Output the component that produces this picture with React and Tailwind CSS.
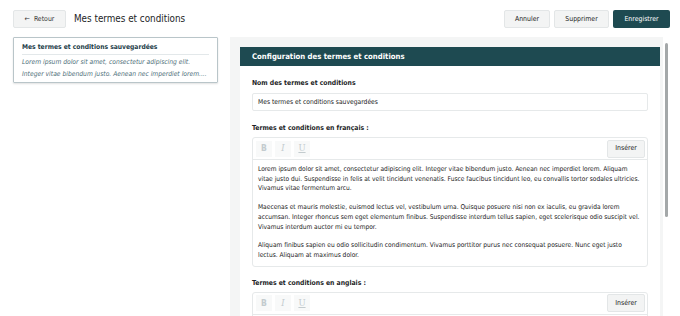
import React from 'react';

const teal = 'bg-[#1e4a51]';

const paragraphs = [
  [
    'Lorem ipsum dolor sit amet, consectetur adipiscing elit. Integer vitae bibendum justo. Aenean nec imperdiet lorem. Aliquam',
    'vitae justo dui. Suspendisse in felis at velit tincidunt venenatis. Fusce faucibus tincidunt leo, eu convallis tortor sodales ultricies.',
    'Vivamus vitae fermentum arcu.',
  ],
  [
    'Maecenas et mauris molestie, euismod lectus vel, vestibulum urna. Quisque posuere nisi non ex iaculis, eu gravida lorem',
    'accumsan. Integer rhoncus sem eget elementum finibus. Suspendisse interdum tellus sapien, eget scelerisque odio suscipit vel.',
    'Vivamus interdum auctor mi eu tempor.',
  ],
  [
    'Aliquam finibus sapien eu odio sollicitudin condimentum. Vivamus porttitor purus nec consequat posuere. Nunc eget justo',
    'lectus. Aliquam at maximus dolor.',
  ],
];

const Toolbar = () => (
  <div className="flex items-center justify-between h-[22px] border-b border-[#e6e9ea] pl-[3px] pr-[2px]">
    <div className="flex items-center gap-[3px] text-[#c3cbce] text-[8.5px]">
      <span className="w-[16px] h-[16px] flex items-center justify-center bg-[#f8f9f9] font-bold">B</span>
      <span className="w-[16px] h-[16px] flex items-center justify-center bg-[#f8f9f9] italic font-['DejaVu_Serif',serif]">I</span>
      <span className="w-[16px] h-[16px] flex items-center justify-center bg-[#f8f9f9] underline font-['DejaVu_Serif',serif]">U</span>
    </div>
    <button className="h-[18px] w-[38px] bg-[#f3f4f4] border border-[#e3e6e7] rounded-[2px] text-[6.9px] text-[#222]">
      Insérer
    </button>
  </div>
);

export default function App() {
  return (
    <div className="w-[680px] h-[316px] overflow-hidden bg-white text-[#1c2426] font-['DejaVu_Sans_Condensed','DejaVu_Sans',sans-serif]">
      {/* Header */}
      <div className="flex items-center justify-between pl-[13px] pr-[10px] pt-[10px]">
        <div className="flex items-center gap-[8px]">
          <button className="h-[18px] w-[53px] flex items-center justify-center gap-[4px] bg-[#f3f4f4] border border-[#e3e6e7] rounded-[2px] text-[6.9px] text-[#333]">
            <span className="text-[7px]">&larr;</span> Retour
          </button>
          <h1 className="text-[9.8px] text-[#1c2426]">Mes termes et conditions</h1>
        </div>
        <div className="flex items-center gap-[4px] text-[6.9px]">
          <button className="h-[18px] w-[46px] bg-[#f3f4f4] border border-[#e3e6e7] rounded-[2px] text-[#222]">Annuler</button>
          <button className="h-[18px] w-[55px] bg-[#f3f4f4] border border-[#e3e6e7] rounded-[2px] text-[#222]">Supprimer</button>
          <button className={`h-[18px] w-[57px] ${teal} rounded-[2px] text-white`}>Enregistrer</button>
        </div>
      </div>

      {/* Main */}
      <div className="flex gap-[12px] pl-[13px] pr-[10px] pt-[9px]">
        {/* Saved list */}
        <div className="w-[205px] shrink-0 self-start">
          <div className="border border-[#b9c5c9] rounded-[1px] shadow-[0_1px_2px_rgba(0,0,0,0.12)] px-[8px] pt-[4px] pb-[2px] overflow-hidden">
            <div className="text-[6.7px] font-bold text-[#1d3d48] pb-[2px] border-b border-[#e3e8ea]">
              Mes termes et conditions sauvegardées
            </div>
            <p className="text-[6.7px] italic text-[#4d6e78] leading-[12px] pt-[1px] whitespace-nowrap">
              Lorem ipsum dolor sit amet, consectetur adipiscing elit.
              <br />
              Integer vitae bibendum justo. Aenean nec imperdiet lorem....
            </p>
          </div>
        </div>

        {/* Config panel */}
        <div className="flex-1 min-w-0 flex h-[279px]">
          <div className="flex-1 min-w-0 bg-[#f4f5f5] pl-[10px] pr-[3px] pt-[10px] overflow-hidden">
            <div className="bg-white">
              <div className={`${teal} h-[19px] flex items-center px-[12px] text-white text-[7.7px] font-bold`}>
                Configuration des termes et conditions
              </div>
              <div className="px-[12px] pt-[12px] pb-[10px]">
                <label className="block text-[6.8px] font-bold text-[#1c2426] leading-[10px]">
                  Nom des termes et conditions
                </label>
                <div className="mt-[5px] h-[18px] border border-[#e6e9ea] rounded-[2px] flex items-center px-[5px] text-[6.7px] text-[#222]">
                  Mes termes et conditions sauvegardées
                </div>

                <label className="block mt-[12px] text-[6.8px] font-bold text-[#1c2426] leading-[10px]">
                  Termes et conditions en français :
                </label>
                <div className="mt-[4px] border border-[#e6e9ea] rounded-[3px] overflow-hidden">
                  <Toolbar />
                  <div className="px-[5px] pt-[5px] pb-[5px] text-[6.6px] leading-[9.7px] text-[#222] flex flex-col gap-[9px] whitespace-nowrap">
                    {paragraphs.map((lines) => (
                      <p key={lines[0].slice(0, 12)}>
                        {lines.map((l) => (
                          <span key={l} className="block">{l}</span>
                        ))}
                      </p>
                    ))}
                  </div>
                </div>

                <label className="block mt-[11px] text-[6.8px] font-bold text-[#1c2426] leading-[10px]">
                  Termes et conditions en anglais :
                </label>
                <div className="mt-[4px] border border-[#e6e9ea] rounded-[3px]">
                  <Toolbar />
                  <div className="h-[60px]" />
                </div>
              </div>
            </div>
          </div>
          {/* scrollbar */}
          <div className="w-[7px] shrink-0 flex justify-center pt-[6px]">
            <div className="w-[3px] h-[174px] bg-[#a4a8a9] rounded-full" />
          </div>
        </div>
      </div>
    </div>
  );
}
